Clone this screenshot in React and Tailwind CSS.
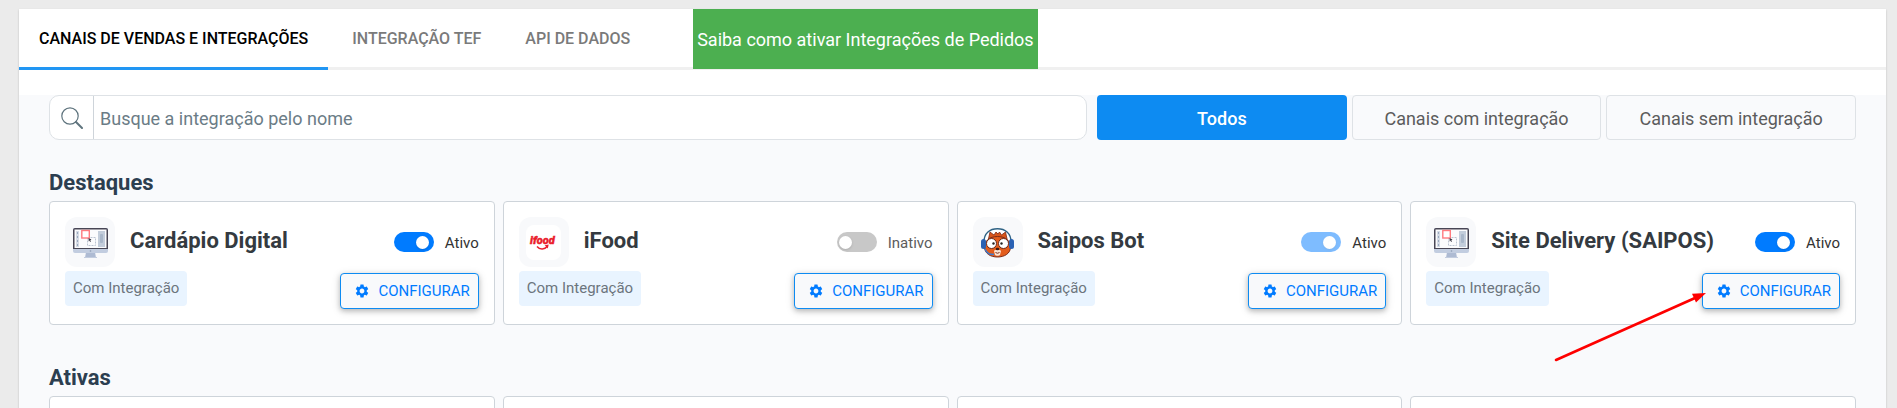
import { useState } from "react";
import { MdSettings } from "react-icons/md";

const tabs = ["CANAIS DE VENDAS E INTEGRAÇÕES", "INTEGRAÇÃO TEF", "API DE DADOS"];

const filters = ["Todos", "Canais com integração", "Canais sem integração"];

const highlights = [
    { id: 1, name: "Cardápio Digital", icon: "monitor", active: true },
    { id: 2, name: "iFood", icon: "ifood", active: false },
    { id: 3, name: "Saipos Bot", icon: "bot", active: true, locked: true },
    { id: 4, name: "Site Delivery (SAIPOS)", icon: "monitor", active: true, pointed: true },
];

function MonitorIcon() {
    return (
        <svg viewBox="0 0 35 35" className="h-[35px] w-[35px]" aria-hidden="true">
            <path d="M13 27h9l1 6H12z" fill="#aebbd3" />
            <path d="M11 32h13v1H11z" fill="#c3cddf" />
            <rect x="0" y="3" width="35" height="25" rx="2" fill="#c2cde0" />
            <path d="M0 24V5a2 2 0 0 1 2-2h31a2 2 0 0 1 2 2v19z" fill="#484655" />
            <rect x="1.500" y="4.500" width="32" height="18.500" fill="#fbfbfd" />
            <rect x="3" y="6" width="3" height="16" fill="#d5dbe5" />
            <path d="M4 8h1M4 12h1M4 16h1M4 20h1" stroke="#9aa9bf" strokeWidth="2" />
            <rect x="25" y="6" width="7" height="16" fill="#c3cddb" />
            <rect x="27" y="9" width="3" height="9" rx="1" fill="#a9b7ca" />
            <rect x="14.500" y="12.500" width="8" height="8" fill="none" stroke="#bcc5d2" strokeDasharray="2 1" />
            <rect x="8.800" y="5.500" width="7.500" height="7.500" fill="#fff" stroke="#ff7b80" strokeWidth="1.400" />
            <path d="M15.500 13l3 1.500-1.200.7.600 1.400-.8.300-.6-1.300-.8.800z" fill="#3d3b49" />
            <circle cx="17.500" cy="26" r=".8" fill="#8d9ab3" />
        </svg>
    );
}

function IfoodIcon() {
    return (
        <svg viewBox="0 0 35 35" className="h-[35px] w-[35px]" role="img" aria-label="ifood">
            <rect width="35" height="35" rx="8" fill="#fff" />
            <text
                x="4"
                y="19"
                fontFamily="Roboto, sans-serif"
                fontSize="11"
                fontWeight="900"
                fontStyle="italic"
                fill="#ea1d2c"
                stroke="#ea1d2c"
                strokeWidth=".4"
            >
                ifood
            </text>
            <path d="M11 21.500c3 3.600 7.500 3.200 10.500-.3" fill="none" stroke="#ea1d2c" strokeWidth="1.500" />
            <path d="M18.700 20.200l4-.7-.9 3.900z" fill="#ea1d2c" />
        </svg>
    );
}

function BotIcon() {
    return (
        <svg viewBox="0 0 35 35" className="h-[35px] w-[35px]" aria-hidden="true">
            <path d="M4 17C4 8 10 3.800 17.500 3.800S31 8 31 17" fill="#fff" stroke="#2f6284" strokeWidth="1.400" />
            <path d="M8 16L10 7l4 3 2-3 2 2 1.500-2 2 3 4-3 2 9z" fill="#d9551a" stroke="#7c2b16" strokeWidth=".8" />
            <path d="M4.500 22c0-6 5-10.500 13-10.500s13 4.500 13 10.500c0 6.500-6 10-13 10s-13-3.500-13-10z" fill="#e35d1c" stroke="#7c2b16" strokeWidth="1" />
            <path d="M14 26c1-2 6-2 7 0l-1 4c-1 1-4 1-5 0z" fill="#fbe3d2" />
            <rect x="1" y="14" width="5" height="10" rx="2.500" fill="#2b62b4" />
            <rect x="29" y="14" width="5" height="10" rx="2.500" fill="#2b62b4" />
            <circle cx="11.500" cy="18.500" r="5" fill="#fff" stroke="#6b2a1b" />
            <circle cx="23.500" cy="18.500" r="5" fill="#fff" stroke="#6b2a1b" />
            <circle cx="13.500" cy="18.500" r="1.200" fill="#222" />
            <circle cx="21.500" cy="18.500" r="1.200" fill="#222" />
            <ellipse cx="17.500" cy="24" rx="1.800" ry="1.300" fill="#3a1b18" />
            <path d="M15.500 27.500q2 1.500 4 0" fill="none" stroke="#7c2b16" />
            <path d="M5 24c2 5 5 5.500 9 5.500" fill="none" stroke="#3b7bd0" strokeWidth="1.500" />
        </svg>
    );
}

const icons = { monitor: MonitorIcon, ifood: IfoodIcon, bot: BotIcon };

function Arrow() {
    return (
        <svg
            viewBox="0 0 154 72"
            className="pointer-events-none absolute top-[18px] -left-[149px] h-[72px] w-[154px]"
            aria-hidden="true"
        >
            <path d="M3 69L142 7" stroke="#fe0000" strokeWidth="2.600" strokeLinecap="round" />
            <path d="M153 2L143 11.500 139 2.800z" fill="#fe0000" />
        </svg>
    );
}

function Switch({ checked, locked, onChange }) {
    return (
        <label className="flex items-center gap-[11px]">
            <input type="checkbox" className="peer sr-only" checked={checked} disabled={locked} onChange={onChange} />
            <span className="flex h-5 w-10 items-center rounded-full bg-[#c8c8c8] px-[2px] peer-checked:justify-end peer-checked:bg-[#007bff] peer-checked:px-[5px] peer-disabled:opacity-50">
                <span className="h-[13px] w-[13px] rounded-full bg-white shadow-sm" />
            </span>
            <span className="pt-[2px] text-[15px] leading-5 text-[#5c5c5c] peer-checked:text-[#333]">
                {checked ? "Ativo" : "Inativo"}
            </span>
        </label>
    );
}

function IntegrationCard({ item }) {
    const [active, setActive] = useState(item.active);
    const Icon = icons[item.icon];

    return (
        <article className="rounded border border-[#ced4da] bg-white p-[15px]">
            <div className="flex items-center">
                <div className="flex h-[50px] w-[50px] shrink-0 items-center justify-center rounded-xl bg-[#f8f9fb]">
                    <Icon />
                </div>
                <h3 className="ml-[15px] flex-1 pb-[2px] text-[22px] leading-7 font-bold whitespace-nowrap text-[#343a40]">
                    {item.name}
                </h3>
                <Switch checked={active} locked={item.locked} onChange={() => setActive(!active)} />
            </div>
            <div className="mt-1 flex items-start justify-between">
                <span className="rounded bg-[#e9f4ff] px-2 text-[15px] leading-[35px] text-[#6c757d]">
                    Com Integração
                </span>
                <div className="relative mt-[2px]">
                    <button
                        type="button"
                        className="flex h-9 items-center gap-2 rounded border border-[#0d8bf2] bg-[#f8f9fb] pr-2 pl-[13px] text-[15px] text-[#007bff] shadow-[0_2px_5px_rgba(0,0,0,0.2),0_2px_10px_rgba(0,0,0,0.14)]"
                    >
                        <MdSettings className="h-4 w-4" />
                        CONFIGURAR
                    </button>
                    {item.pointed && <Arrow />}
                </div>
            </div>
        </article>
    );
}

export default function App() {
    const [tab, setTab] = useState(tabs[0]);
    const [filter, setFilter] = useState(filters[0]);
    const [search, setSearch] = useState("");

    return (
        <div className="h-screen overflow-hidden bg-[#ebebeb] pt-[9px] pr-[11px] pl-[19px] font-[Roboto,sans-serif]">
            <main className="min-h-full bg-white shadow-[0_1px_2px_rgba(0,0,0,0.2)]">
                <nav className="flex h-[61px] shadow-[inset_0_-3px_0_#f0f0f0]">
                    <div className="flex gap-1">
                        {tabs.map((name) => (
                            <button
                                key={name}
                                type="button"
                                onClick={() => setTab(name)}
                                className={
                                    name === tab
                                        ? "border-b-[3px] border-[#2196f3] px-5 pt-[2px] text-base font-medium text-black"
                                        : "border-b-[3px] border-transparent px-5 pt-[2px] text-base font-medium text-[#7a7a7a]"
                                }
                            >
                                {name}
                            </button>
                        ))}
                    </div>
                    <a
                        href="#ajuda"
                        className="ml-[43px] flex h-[60px] items-center bg-[#4caf50] px-1 pt-[2px] text-lg text-white"
                    >
                        Saiba como ativar Integrações de Pedidos
                    </a>
                </nav>

                <div className="mt-[25px] min-h-[400px] bg-[#f9fafc] px-[30px]">
                    <div className="flex gap-[10px]">
                        <div className="flex h-[45px] flex-1 overflow-hidden rounded-[10px] border border-[#dee2e6] bg-white">
                            <label htmlFor="search" className="flex w-11 items-center justify-center border-r border-[#ced4da]">
                                <svg viewBox="0 0 22 22" className="h-[22px] w-[22px]" aria-label="Buscar">
                                    <circle cx="9" cy="9" r="8.200" fill="none" stroke="#5f747e" strokeWidth="1.200" />
                                    <path d="M15 15l6 6" stroke="#5f747e" strokeWidth="2" strokeLinecap="round" />
                                </svg>
                            </label>
                            <input
                                id="search"
                                type="text"
                                value={search}
                                onChange={(e) => setSearch(e.target.value)}
                                placeholder="Busque a integração pelo nome"
                                className="flex-1 px-[6px] pt-[2px] text-lg text-[#495057] outline-none placeholder:text-[#6b7c86]"
                            />
                        </div>
                        <div className="grid w-[42%] grid-cols-3 gap-[5px]">
                            {filters.map((name) => (
                                <button
                                    key={name}
                                    type="button"
                                    onClick={() => setFilter(name)}
                                    className={
                                        name === filter
                                            ? "rounded bg-[#0d8bf2] pt-[2px] text-lg font-medium text-white"
                                            : "rounded border border-[#dee2e6] pt-[2px] text-lg text-[#5c5c5c]"
                                    }
                                >
                                    {name}
                                </button>
                            ))}
                        </div>
                    </div>

                    <section className="pt-[29px]">
                        <h2 className="pb-1 text-[22px] leading-7 font-bold text-[#2c3e50]">Destaques</h2>
                        <div className="grid grid-cols-4 gap-2">
                            {highlights.map((item) => (
                                <IntegrationCard key={item.id} item={item} />
                            ))}
                        </div>
                    </section>

                    <section className="pt-[39px]">
                        <h2 className="pb-1 text-[22px] leading-7 font-bold text-[#2c3e50]">Ativas</h2>
                        <div className="grid grid-cols-4 gap-2">
                            {highlights.map((item) => (
                                <div key={item.id} className="h-[124px] rounded border border-[#ced4da] bg-white" />
                            ))}
                        </div>
                    </section>
                </div>
            </main>
        </div>
    );
}
